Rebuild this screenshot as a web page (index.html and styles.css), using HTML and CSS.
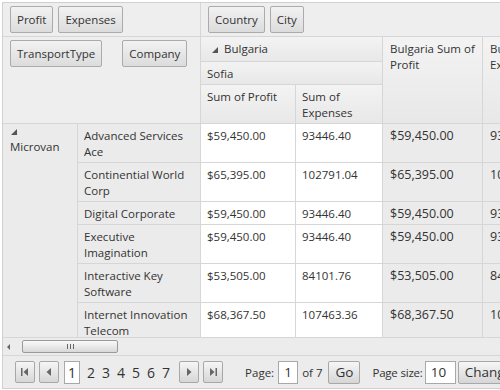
FILE: index.html
```html
<!DOCTYPE html>
<html lang="en">
<head>
    <meta charset="UTF-8">
    <title>Pivot Grid</title>
    <link rel="stylesheet" href="styles.css">
</head>
<body>
    <div class="pivot">
        <!-- Header: field zones and column headers -->
        <div class="head">
            <div class="cell zone data-zone">
                <span class="field">Profit</span>
                <span class="field">Expenses</span>
            </div>
            <div class="cell zone col-zone">
                <span class="field">Country</span>
                <span class="field">City</span>
            </div>
            <div class="cell zone row-zone">
                <span class="field">TransportType</span>
                <span class="field">Company</span>
            </div>
            <div class="cell hcell bulgaria"><span class="tri"></span>Bulgaria</div>
            <div class="cell hcell total-profit">Bulgaria Sum of Profit</div>
            <div class="cell hcell total-expenses">Bulgaria Sum of Expenses</div>
            <div class="cell hcell sofia">Sofia</div>
            <div class="cell hcell">Sum of Profit</div>
            <div class="cell hcell">Sum of Expenses</div>
        </div>

        <!-- Body rows -->
        <div class="body">
            <div class="grid rows">
                <div class="cell rh microvan"><span class="tri block"></span>Microvan</div>

                <div class="cell rh">Advanced Services Ace</div>
                <div class="cell dc">$59,450.00</div>
                <div class="cell dc">93446.40</div>
                <div class="cell tc">$59,450.00</div>
                <div class="cell tc">93446.40</div>

                <div class="cell rh">Continential World Corp</div>
                <div class="cell dc">$65,395.00</div>
                <div class="cell dc">102791.04</div>
                <div class="cell tc">$65,395.00</div>
                <div class="cell tc">102791.04</div>

                <div class="cell rh">Digital Corporate</div>
                <div class="cell dc">$59,450.00</div>
                <div class="cell dc">93446.40</div>
                <div class="cell tc">$59,450.00</div>
                <div class="cell tc">93446.40</div>

                <div class="cell rh">Executive Imagination</div>
                <div class="cell dc">$59,450.00</div>
                <div class="cell dc">93446.40</div>
                <div class="cell tc">$59,450.00</div>
                <div class="cell tc">93446.40</div>

                <div class="cell rh">Interactive Key Software</div>
                <div class="cell dc">$53,505.00</div>
                <div class="cell dc">84101.76</div>
                <div class="cell tc">$53,505.00</div>
                <div class="cell tc">84101.76</div>

                <div class="cell rh">Internet Innovation Telecom</div>
                <div class="cell dc">$68,367.50</div>
                <div class="cell dc">107463.36</div>
                <div class="cell tc">$68,367.50</div>
                <div class="cell tc">107463.36</div>
            </div>
        </div>

        <!-- Horizontal scrollbar -->
        <div class="hscroll">
            <span class="arrow-left"></span>
            <span class="thumb"><span class="grip"></span></span>
        </div>

        <!-- Pager -->
        <div class="pager">
            <span class="pbtn">
                <svg width="10" height="10" viewBox="0 0 10 10"><rect x="1" y="1" width="1.5" height="8" fill="#666"/><path d="M8 1 L3.5 5 L8 9 Z" fill="#666"/></svg>
            </span>
            <span class="pbtn">
                <svg width="10" height="10" viewBox="0 0 10 10"><path d="M7 1 L2.5 5 L7 9 Z" fill="#666"/></svg>
            </span>
            <span class="pages">
                <span class="page current">1</span>
                <span class="page">2</span>
                <span class="page">3</span>
                <span class="page">4</span>
                <span class="page">5</span>
                <span class="page">6</span>
                <span class="page">7</span>
            </span>
            <span class="pbtn">
                <svg width="10" height="10" viewBox="0 0 10 10"><path d="M3 1 L7.5 5 L3 9 Z" fill="#666"/></svg>
            </span>
            <span class="pbtn">
                <svg width="10" height="10" viewBox="0 0 10 10"><path d="M2 1 L6.5 5 L2 9 Z" fill="#666"/><rect x="7.5" y="1" width="1.5" height="8" fill="#666"/></svg>
            </span>
            <span class="label page-label">Page:</span>
            <span class="input small">1</span>
            <span class="label of-label">of 7</span>
            <span class="btn">Go</span>
            <span class="label size-label">Page size:</span>
            <span class="input wide">10</span>
            <span class="btn">Change</span>
        </div>
    </div>
</body>
</html>
```

FILE: styles.css
```css
body {
    margin: 0;
    font-family: "Open Sans", "Liberation Sans", sans-serif;
    font-size: 11.5px;
    color: #333;
    background: #fff;
}

.pivot {
    box-sizing: border-box;
    margin: 2px 0 0 2px;
    width: 498px;
    height: 387px;
    border: 1px solid #d0d0d0;
    border-right: none;
    overflow: hidden;
    background: #ececec;
}

.head,
.rows {
    display: grid;
    grid-template-columns: 75px 123px 95px 87px 100px 100px;
}

.head {
    grid-template-rows: 34px 25px 23px 39px;
}

.rows {
    grid-template-rows: 39px 39px 23px 39px 39px 39px;
}

.cell {
    box-sizing: border-box;
    border-right: 1px solid #d6d6d6;
    border-bottom: 1px solid #d6d6d6;
    padding: 4px 6px;
    line-height: 16px;
}

/* field zones */
.zone {
    display: flex;
    align-items: flex-start;
    gap: 5px;
    padding: 3px 0 0 7px;
    background: #eeeeee;
}

.data-zone { grid-column: 1 / 3; }
.col-zone { grid-column: 3 / 7; }
.row-zone {
    grid-column: 1 / 3;
    grid-row: 2 / 5;
    gap: 20px;
}

.field {
    box-sizing: border-box;
    height: 27px;
    line-height: 25px;
    padding: 0 6px;
    border: 1px solid #ababab;
    border-radius: 2px;
    background: linear-gradient(#f2f2f2, #dcdcdc);
    white-space: nowrap;
}

/* column headers */
.hcell {
    background: linear-gradient(#f3f3f3, #e8e8e8);
}

.bulgaria { grid-column: 3 / 5; padding-left: 11px; }
.sofia { grid-column: 3 / 5; }
.total-profit { grid-column: 5; grid-row: 2 / 5; padding-left: 7px; }
.total-expenses { grid-column: 6; grid-row: 2 / 5; padding-left: 7px; }

.tri {
    display: inline-block;
    width: 0;
    height: 0;
    margin-right: 6px;
    border-left: 6px solid transparent;
    border-bottom: 6px solid #555;
}

.tri.block {
    display: block;
    margin: 0 0 4px 1px;
}

/* body */
.body {
    height: 213px;
    overflow: hidden;
    background: #fff;
}

.rh {
    background: #ebebeb;
}

.microvan {
    grid-row: 1 / 7;
    padding: 5px 7px;
}

.dc {
    background: #fff;
    padding-left: 6px;
}

.tc {
    background: #ebebeb;
    padding-left: 7px;
    font-size: 12.5px;
}

/* scrollbar */
.hscroll {
    box-sizing: border-box;
    height: 18px;
    border-top: 1px solid #d6d6d6;
    display: flex;
    align-items: center;
    padding-left: 4px;
    background: #ececec;
}

.arrow-left {
    width: 0;
    height: 0;
    border-top: 3px solid transparent;
    border-bottom: 3px solid transparent;
    border-right: 3px solid #666;
    margin-right: 12px;
}

.thumb {
    box-sizing: border-box;
    width: 96px;
    height: 13px;
    border: 1px solid #9a9a9a;
    border-radius: 2px;
    background: linear-gradient(#fafafa, #d8d8d8);
    display: flex;
    align-items: center;
    justify-content: center;
}

.grip {
    width: 7px;
    height: 5px;
    background: repeating-linear-gradient(90deg, #666 0 1px, transparent 1px 3px);
}

/* pager */
.pager {
    box-sizing: border-box;
    height: 33px;
    border-top: 1px solid #d6d6d6;
    display: flex;
    align-items: center;
    padding-left: 12px;
    white-space: nowrap;
}

.pager > * {
    flex-shrink: 0;
}

.pbtn {
    box-sizing: border-box;
    width: 20px;
    height: 22px;
    margin-right: 4px;
    border: 1px solid #a8a8a8;
    border-radius: 2px;
    background: linear-gradient(#f6f6f6, #d6d6d6);
    display: flex;
    align-items: center;
    justify-content: center;
}

.pages {
    display: flex;
    align-items: center;
    margin: 0 2px 0 1px;
    font-size: 14px;
}

.page {
    margin-right: 7px;
}

.page.current {
    box-sizing: border-box;
    width: 16px;
    height: 23px;
    line-height: 21px;
    text-align: center;
    border: 1px solid #a8a8a8;
    background: #fff;
}

.label {
    font-size: 11.5px;
    margin-right: 4px;
}

.page-label { margin-left: 18px; }
.of-label { margin-right: 6px; }
.size-label { margin-left: 12px; margin-right: 2px; letter-spacing: -0.2px; }

.input {
    box-sizing: border-box;
    height: 23px;
    line-height: 21px;
    border: 1px solid #a8a8a8;
    background: #fff;
    font-size: 13.5px;
    padding-left: 5px;
    margin-right: 4px;
}

.input.small { width: 20px; }
.input.wide { width: 31px; margin-right: 2px; }

.btn {
    box-sizing: border-box;
    height: 23px;
    line-height: 21px;
    padding: 0 6px;
    border: 1px solid #a8a8a8;
    border-radius: 2px;
    background: linear-gradient(#f6f6f6, #d6d6d6);
    font-size: 13.5px;
}
```
